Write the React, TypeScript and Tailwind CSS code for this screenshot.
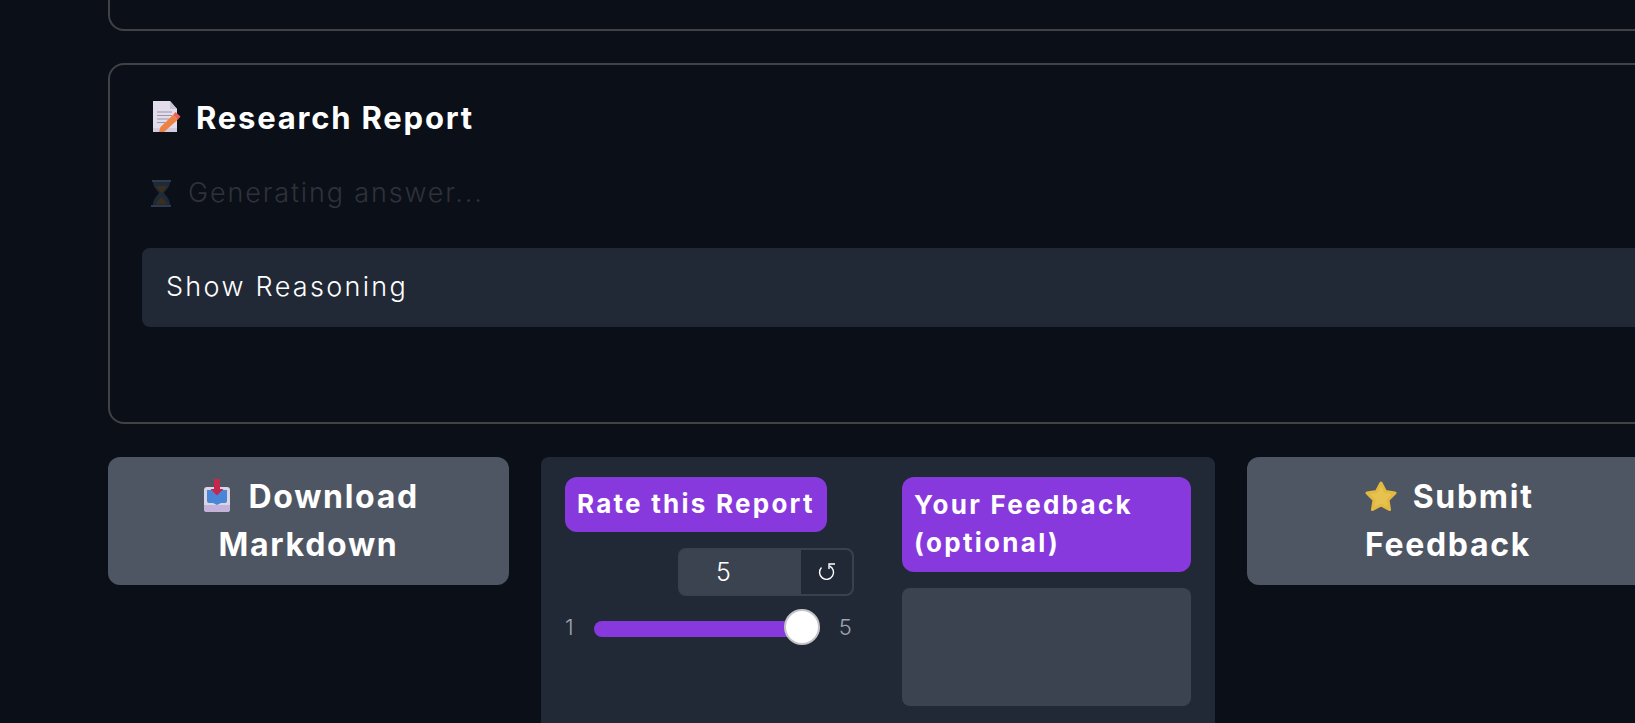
const DocIcon = () => (
  <svg width="30" height="32" viewBox="0 0 30 32" className="shrink-0">
    <path d="M1 0h17l7 8v23H1z" fill="#e3dcec" />
    <path d="M18 0l7 8h-7z" fill="#c9c2d2" />
    <path d="M1 27h24v4H1z" fill="#d3cadf" />
    <path d="M5 11h15M5 14.500h15M5 18h12M5 21.500h8" stroke="#9a96a6" strokeWidth="1.200" />
    <path d="M7 31l1.500-5L21 14l5 4.500L12 31z" fill="#ee8243" />
    <path d="M21 14l2.500-3 5 4.500-2.500 3z" fill="#e9635c" />
  </svg>
)

const HourglassIcon = () => (
  <svg width="21" height="27" viewBox="0 0 21 27" className="shrink-0">
    <path d="M1 0h19v2H1zM0 25h20v2H0z" fill="#2f3b4a" />
    <path d="M2 2h17c0 5-4 8-6 11 2 3 6 6 6 12H2c0-6 4-9 6-12C6 10 2 7 2 2z" fill="#1f2a38" />
    <path d="M5 6h11c-1 3-4 5-5.500 7C9 11 6 9 5 6zM5 24c1-3 4-5 5.500-7 1.500 2 4.500 4 5.500 7z" fill="#3b2d20" />
  </svg>
)

const InboxIcon = () => (
  <svg width="26" height="33" viewBox="0 0 26 33" className="inline-block shrink-0 align-[-4px]">
    <rect x="0" y="8" width="26" height="25" rx="3" fill="#d9d6e2" />
    <path d="M0 26h26v4a3 3 0 0 1-3 3H3a3 3 0 0 1-3-3z" fill="#c3b3da" />
    <path d="M3 11h20v11a2 2 0 0 1-2 2h-4l-4 2-4-2H5a2 2 0 0 1-2-2z" fill="#4a86d8" />
    <path d="M10 0h6v10h3.500L13 16.500 6.500 10H10z" fill="#c5284f" />
  </svg>
)

const StarIcon = () => (
  <svg width="32" height="31" viewBox="0 0 32 31" className="inline-block shrink-0 align-[-4px]">
    <path
      d="M16 2l4.500 8.500 9.500 1.500-7 7 1.500 9.500-8.500-4.500-8.500 4.500L9 19l-7-7 9.500-1.500z"
      fill="#e6c351"
      stroke="#e3b93f"
      strokeWidth="3"
      strokeLinejoin="round"
    />
  </svg>
)

const ResetIcon = () => (
  <svg width="19" height="18" viewBox="0 0 19 18" fill="none" stroke="white" strokeWidth="1.400">
    <path d="M4.500 4.500a7 7 0 1 0 8-1.500" />
    <path d="M12 1v5M11.300 1H18" />
  </svg>
)

export default function App() {
  return (
    <div className="h-screen overflow-hidden bg-[#0b0f18] pl-[108px] font-['Inter',sans-serif] text-white">
      <div className="flex w-[1541px] flex-col">
        <div className="h-[31px] w-[1600px] rounded-b-2xl border-2 border-t-0 border-[#414245]" />

        <section className="mt-[32px] h-[361px] w-[1600px] rounded-2xl border-2 border-[#414245] px-[32px]">
          <div className="ml-[10px] mt-[36px] flex h-[32px] items-center gap-[14px]">
            <DocIcon />
            <h2 className="text-[31px] font-bold leading-none tracking-[1.800px]">Research Report</h2>
          </div>
          <div className="ml-[9px] mt-[46px] flex h-[28px] items-center gap-[16px] text-[27px] font-light tracking-[1.85px] text-[#2e323b]">
            <HourglassIcon />
            <span>Generating answer...</span>
          </div>
          <div className="mt-[41px] flex h-[79px] items-center rounded-lg bg-[#222936] px-[24px] text-[27px] font-light tracking-[2.3px]">
            Show Reasoning
          </div>
        </section>

        <div className="mt-[33px] grid grid-cols-[401px_674px_402px] gap-[32px]">
          <button className="h-[128px] self-start rounded-xl bg-[#4f5663] text-[32px] font-bold leading-[48px] tracking-[1.700px]">
            <span className="block pl-[6px]">
              <InboxIcon /> <span className="ml-[9px]">Download</span>
            </span>
            <span className="block">Markdown</span>
          </button>

          <div className="grid h-[300px] grid-cols-2 gap-[48px] rounded-lg bg-[#222936] px-[24px] pt-[20px]">
            <div>
              <div className="inline-block rounded-xl bg-[#8839dd] px-[12px] pb-[9.500px] pt-[7.500px] text-[26px] font-bold leading-[38px] tracking-[2.250px]">
                Rate this Report
              </div>
              <div className="ml-auto mt-[16px] flex h-[48px] w-[176px] overflow-hidden rounded-lg border-2 border-[#374151] bg-[#3c4350]">
                <div className="flex-1 pr-[34px] text-center text-[25px] font-light leading-[44px]">5</div>
                <div className="flex w-[51px] items-center justify-center bg-[#222936]">
                  <ResetIcon />
                </div>
              </div>
              <div className="mt-[13px] flex h-[36px] items-center text-[22px] font-light text-[#9ca3af]">
                <span>1</span>
                <div className="relative ml-[20px] mt-[4px] h-[16px] w-[226px] rounded-full bg-[#8839dd]">
                  <div className="absolute right-0 top-[-12px] size-[36px] rounded-full border-2 border-[#c4c4c8] bg-white" />
                </div>
                <span className="ml-[19px]">5</span>
              </div>
            </div>
            <div>
              <div className="rounded-xl bg-[#8839dd] px-[12px] pb-[10.500px] pt-[8.500px] text-[26px] font-bold leading-[38px] tracking-[2.300px]">
                Your Feedback (optional)
              </div>
              <div className="mt-[16px] h-[118px] rounded-lg bg-[#3c4350]" />
            </div>
          </div>

          <button className="h-[128px] self-start rounded-xl bg-[#4f5663] text-[32px] font-bold leading-[48px] tracking-[1.700px]">
            <span className="block pl-[3px]">
              <StarIcon /> <span className="ml-[6px]">Submit</span>
            </span>
            <span className="block">Feedback</span>
          </button>
        </div>
      </div>
    </div>
  )
}
